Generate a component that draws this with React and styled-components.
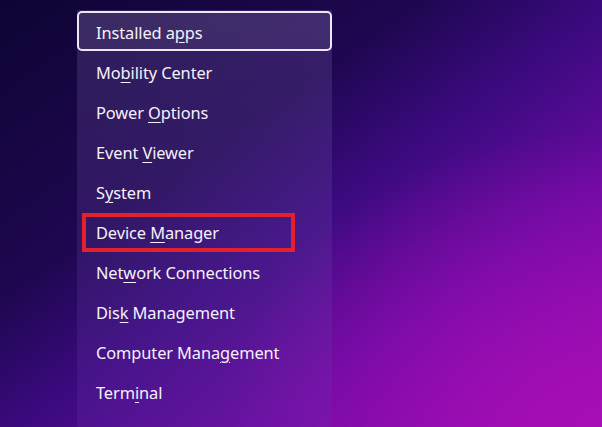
import React from "react";
import styled, { createGlobalStyle } from "styled-components";

const GlobalStyle = createGlobalStyle`
  html, body {
    margin: 0;
    padding: 0;
    height: 100%;
    overflow: hidden;
  }
  body {
    font-family: "Noto Sans", "Open Sans", sans-serif;
  }
`;

const Desktop = styled.div`
  width: 602px;
  height: 427px;
  overflow: hidden;
  padding: 10px 0 0 77px;
  box-sizing: border-box;
  background:
    radial-gradient(ellipse 380px 300px at 600px 430px, rgba(170, 14, 182, 0.85), rgba(170, 14, 182, 0) 100%),
    linear-gradient(to bottom right, #0e0434 0%, #1e0750 35%, #3c0a80 52%, #6a0aa2 72%, #9a0cb2 100%);
`;

const Menu = styled.ul`
  list-style: none;
  margin: 0;
  padding: 1px 0 0;
  width: 255px;
  min-height: 440px;
  background: linear-gradient(180deg, rgba(120, 95, 170, 0.28) 0%, rgba(110, 70, 175, 0.22) 60%, rgba(105, 40, 170, 0.25) 100%);
`;

const Item = styled.li`
  position: relative;
  height: 40px;
  display: flex;
  align-items: center;
  padding: 2px 0 0 ${p => (p.$active ? "17px" : "19px")};
  box-sizing: border-box;
  color: #f5f1fa;
  font-size: 16.4px;
  letter-spacing: -0.1px;
  border: ${p => (p.$active ? "2px solid #ece8f2" : "none")};
  border-radius: 5px;
  background: ${p => (p.$active ? "rgba(255, 255, 255, 0.06)" : "transparent")};

  &::after {
    content: "";
    display: ${p => (p.$marked ? "block" : "none")};
    position: absolute;
    left: 5px;
    top: 2px;
    width: 213px;
    height: 39px;
    box-sizing: border-box;
    border: 4px solid #e3212d;
  }
`;

const Key = styled.span`
  text-decoration: underline;
  text-decoration-thickness: 1px;
  text-underline-offset: 3px;
`;

const items = [
  ["Installed a", "p", "ps"],
  ["Mo", "b", "ility Center"],
  ["Power ", "O", "ptions"],
  ["Event ", "V", "iewer"],
  ["S", "y", "stem"],
  ["Device ", "M", "anager"],
  ["Net", "w", "ork Connections"],
  ["Dis", "k", " Management"],
  ["Computer Mana", "g", "ement"],
  ["Term", "i", "nal"],
  ["Terminal (", "A", "dmin)"],
];

export default function App() {
  return (
    <>
      <GlobalStyle />
      <Desktop>
        <Menu>
          {items.map(([a, k, b], i) => (
            <Item key={i} $active={i === 0} $marked={i === 5}>
              <span>
                {a}
                <Key>{k}</Key>
                {b}
              </span>
            </Item>
          ))}
        </Menu>
      </Desktop>
    </>
  );
}
